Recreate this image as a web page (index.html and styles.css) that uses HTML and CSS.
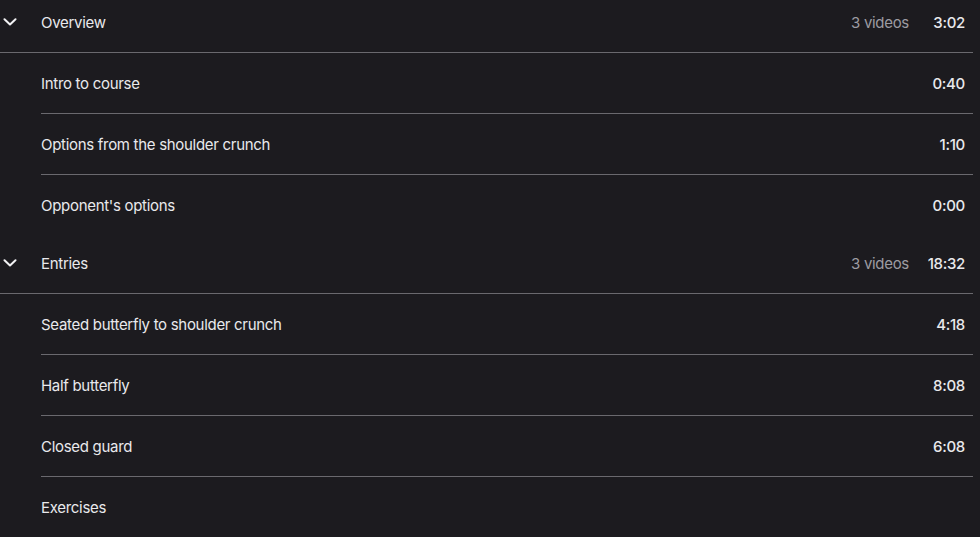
FILE: index.html
```html
<!DOCTYPE html>
<html>
<head>
<meta charset="utf-8">
<link rel="stylesheet" href="styles.css">
</head>
<body>
<div class="course">
  <section class="section">
    <div class="section-head">
      <span class="chev"><svg width="14" height="8" viewBox="0 0 14 8"><path d="M1.5 1.2 L7 6.5 L12.5 1.2" fill="none" stroke="#f2f2f4" stroke-width="2" stroke-linecap="round" stroke-linejoin="round"/></svg></span>
      <span class="title">Overview</span>
      <span class="count">3 videos</span>
      <span class="dur">3:02</span>
    </div>
    <ul class="items">
      <li class="item"><span class="title">Intro to course</span><span class="dur">0:40</span></li>
      <li class="item"><span class="title">Options from the shoulder crunch</span><span class="dur">1:10</span></li>
      <li class="item"><span class="title">Opponent's options</span><span class="dur">0:00</span></li>
    </ul>
  </section>
  <section class="section">
    <div class="section-head">
      <span class="chev"><svg width="14" height="8" viewBox="0 0 14 8"><path d="M1.5 1.2 L7 6.5 L12.5 1.2" fill="none" stroke="#f2f2f4" stroke-width="2" stroke-linecap="round" stroke-linejoin="round"/></svg></span>
      <span class="title">Entries</span>
      <span class="count">3 videos</span>
      <span class="dur">18:32</span>
    </div>
    <ul class="items">
      <li class="item"><span class="title">Seated butterfly to shoulder crunch</span><span class="dur">4:18</span></li>
      <li class="item"><span class="title">Half butterfly</span><span class="dur">8:08</span></li>
      <li class="item"><span class="title">Closed guard</span><span class="dur">6:08</span></li>
      <li class="item"><span class="title">Exercises</span></li>
    </ul>
  </section>
</div>
</body>
</html>
```

FILE: styles.css
```css
html, body {
  margin: 0;
  padding: 0;
  background: #1c1b1f;
  height: 100%;
  overflow: hidden;
}
body {
  font-family: Inter, "Noto Sans", sans-serif;
  font-size: 15px;
  font-weight: 400;
  letter-spacing: -0.3px;
  color: #e9e9ec;
}
.course {
  width: 973px;
  margin-top: -6px;
}
.section-head {
  display: flex;
  align-items: center;
  height: 56px;
  padding-bottom: 2px;
  border-bottom: 1px solid #6a696e;
}
.chev {
  width: 38px;
  padding-left: 3px;
  display: flex;
  align-items: center;
}
.title {
  flex: 1;
}
.count {
  color: #9d9ca2;
}
.dur {
  padding-right: 8px;
  font-weight: 500;
  text-align: right;
}
.section-head .dur {
  width: 56px;
}
.items {
  list-style: none;
  margin: 0;
  padding: 0 0 0 41px;
}
.item {
  display: flex;
  align-items: center;
  height: 60px;
  border-bottom: 1px solid #6a696e;
}
.item:last-child {
  border-bottom: none;
}
```
